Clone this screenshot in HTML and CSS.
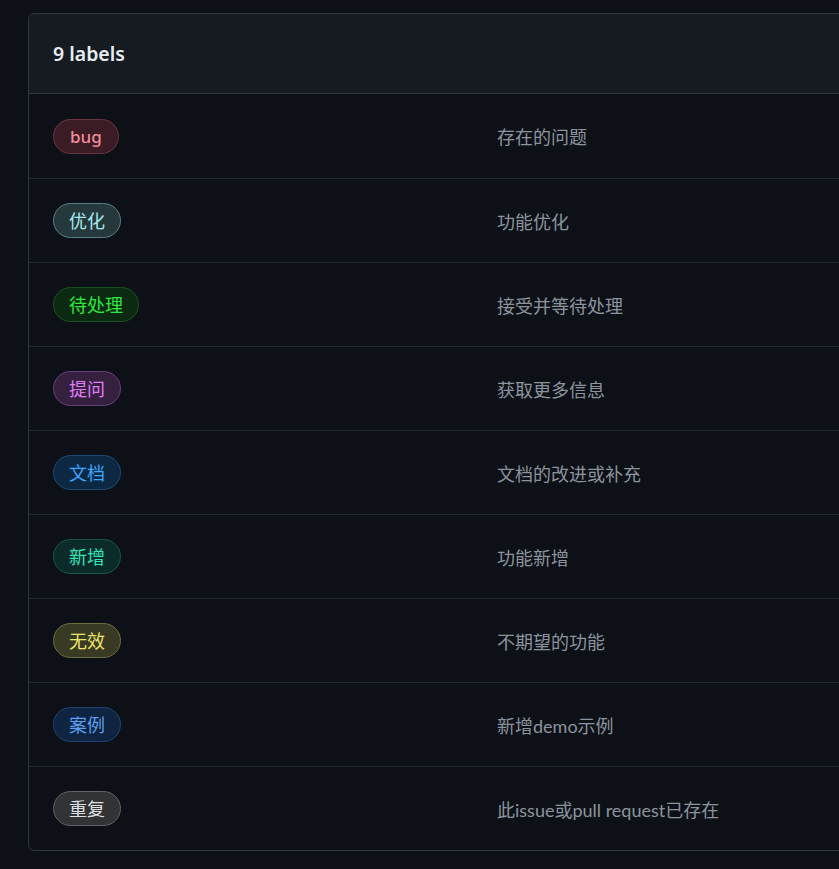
FILE: index.html
```html
<!DOCTYPE html>
<html lang="zh-CN">
<head>
<meta charset="utf-8">
<title>Labels</title>
<link rel="stylesheet" href="styles.css">
</head>
<body>
<div class="box">
  <div class="box-header"><h3 class="title">9 labels</h3></div>
  <div class="row"><div class="label-col"><span class="label latin l-bug">bug</span></div><div class="desc">存在的问题</div></div>
  <div class="row"><div class="label-col"><span class="label l-opt">优化</span></div><div class="desc">功能优化</div></div>
  <div class="row"><div class="label-col"><span class="label l-wait">待处理</span></div><div class="desc">接受并等待处理</div></div>
  <div class="row"><div class="label-col"><span class="label l-ask">提问</span></div><div class="desc">获取更多信息</div></div>
  <div class="row"><div class="label-col"><span class="label l-doc">文档</span></div><div class="desc">文档的改进或补充</div></div>
  <div class="row"><div class="label-col"><span class="label l-new">新增</span></div><div class="desc">功能新增</div></div>
  <div class="row"><div class="label-col"><span class="label l-inv">无效</span></div><div class="desc">不期望的功能</div></div>
  <div class="row"><div class="label-col"><span class="label l-demo">案例</span></div><div class="desc">新增demo示例</div></div>
  <div class="row"><div class="label-col"><span class="label l-dup">重复</span></div><div class="desc">此issue或pull request已存在</div></div>
</div>
</body>
</html>
```
FILE: styles.css
```css
html, body {
  margin: 0;
  padding: 0;
  background: #0d1117;
  overflow: hidden;
}
body {
  font-family: "Noto Sans", "Noto Sans CJK SC", sans-serif;
  color: #e6edf3;
  padding: 13px 0 0 28px;
}
.box {
  width: 1000px;
  border: 1px solid #30363d;
  border-radius: 6px;
  background: #0d1117;
}
.box-header {
  height: 79px;
  background: #161b22;
  border-bottom: 1px solid #30363d;
  border-radius: 6px 6px 0 0;
  display: flex;
  align-items: center;
  padding-left: 24px;
}
.title {
  margin: 0;
  font-size: 19.5px;
  font-weight: 600;
  color: #e6edf3;
}
.row {
  height: 83px;
  display: flex;
  align-items: center;
  padding-left: 24px;
  border-bottom: 1px solid #21262d;
}
.box-header + .row {
  height: 84px;
}
.row:last-child {
  border-bottom: none;
}
.label-col {
  width: 444px;
  flex: none;
  display: flex;
  align-items: center;
}
.label {
  display: inline-flex;
  align-items: center;
  height: 33px;
  padding: 0 15px;
  border: 1px solid;
  border-radius: 18px;
  font-size: 18px;
  font-weight: 400;
  line-height: 1;
}
.label.latin {
  font-size: 17px;
  font-weight: 500;
  padding: 0 16px;
}
.desc {
  font-family: "Lato", "Noto Sans CJK SC", sans-serif;
  font-size: 18px;
  color: #8b949e;
}
.l-bug { background: #3b1c24; border-color: #6b3440; color: #f28b9a; }
.l-opt { background: #25393c; border-color: #587f85; color: #a8e8ef; }
.l-wait { background: #0c2a12; border-color: #15521f; color: #2ee83e; }
.l-ask { background: #35213f; border-color: #6a3d7e; color: #e07df5; }
.l-doc { background: #0c2843; border-color: #1b4b73; color: #3ea6ff; }
.l-new { background: #0b2a2a; border-color: #17574c; color: #35e5b5; }
.l-inv { background: #393a23; border-color: #6e6c3a; color: #ece56a; }
.l-demo { background: #0f2440; border-color: #1f4472; color: #5a9ff0; }
.l-dup { background: #313335; border-color: #5e6166; color: #dde0e3; }
```
